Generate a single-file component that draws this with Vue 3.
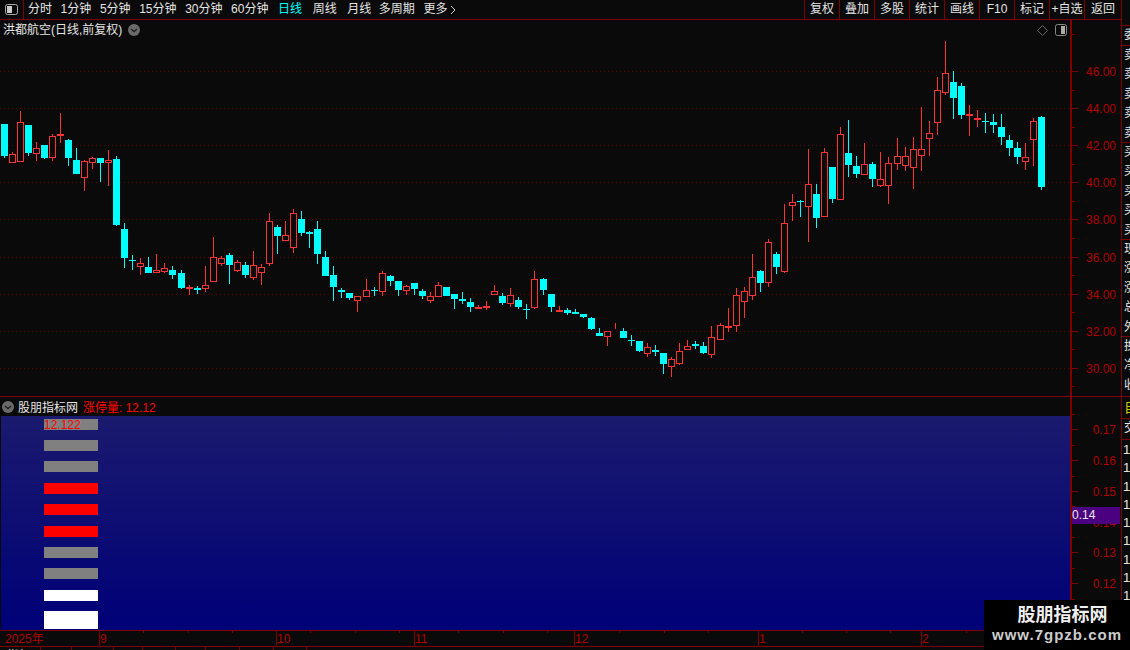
<script setup>
const raw = [
[0,124,124,156,158],[1,152,154,163,163],[1,111,122,162,162],[0,125,125,153,156],[1,142,148,154,161],[0,145,145,158,159],[1,134,136,158,161],[1,113,134,136,143],[0,139,140,158,166],[0,148,160,174,174],
[1,160,161,178,191],[1,157,158,163,169],[0,158,158,163,182],[1,150,160,163,186],[0,156,159,225,226],[0,223,229,258,268],[0,255,260,261,270],[1,258,263,267,275],[0,257,267,273,273],[1,254,270,273,273],
[1,263,268,272,273],[0,266,270,275,279],[0,270,273,288,289],[1,285,287,289,295],[0,286,288,290,294],[1,266,285,289,292],[1,237,257,282,282],[1,256,258,264,266],[0,253,255,265,284],[1,260,262,271,272],
[0,262,265,275,278],[1,251,265,278,280],[1,264,267,273,285],[1,213,221,264,266],[0,225,227,236,254],[1,221,235,241,241],[1,209,213,248,253],[0,211,219,233,236],[0,231,232,234,248],[0,221,229,254,264],
[0,251,257,276,276],[0,266,275,287,301],[0,288,290,292,298],[0,293,293,298,300],[1,296,296,301,312],[1,279,290,297,297],[0,287,290,291,296],[1,271,273,292,296],[0,275,276,281,286],[0,281,281,290,296],
[1,285,286,291,295],[0,283,283,289,295],[0,289,291,296,299],[1,292,296,301,303],[1,282,285,297,297],[0,287,287,296,296],[0,294,294,299,309],[0,292,299,301,304],[0,298,302,307,312],[1,305,307,309,309],
[1,301,306,308,310],[1,285,291,295,295],[0,293,296,303,305],[1,288,295,304,307],[0,297,300,307,309],[0,304,309,310,319],[1,271,279,308,309],[0,278,279,290,295],[0,294,294,307,312],[1,306,310,312,312],
[0,308,310,313,315],[0,309,312,314,314],[0,314,314,317,318],[0,317,318,329,330],[0,328,333,336,336],[1,331,331,337,346],[1,323,329,330,330],[0,328,331,338,338],[0,335,340,341,346],[0,341,341,351,352],
[1,343,347,354,357],[0,345,350,352,356],[0,353,353,364,374],[1,357,359,367,377],[1,343,351,364,365],[1,340,346,350,350],[0,341,344,346,349],[0,342,346,353,354],[1,326,337,355,358],[1,323,325,340,340],
[1,308,326,328,332],[1,288,295,326,332],[1,287,291,302,318],[1,254,277,296,300],[0,270,271,283,292],[1,239,242,283,287],[0,252,254,267,274],[1,204,223,272,273],[1,194,202,206,221],[0,200,201,202,217],
[1,149,184,207,242],[0,184,194,218,228],[1,148,152,217,217],[0,167,167,199,203],[1,127,134,200,200],[0,120,153,165,177],[0,156,166,174,178],[1,143,164,175,175],[0,162,164,179,187],[1,152,179,186,187],
[1,157,163,186,204],[1,138,156,164,170],[1,147,156,166,171],[1,137,149,168,189],[1,107,149,156,171],[1,121,133,139,156],[1,77,90,123,135],[1,41,73,93,95],[0,71,82,98,119],[0,83,86,115,119],
[1,105,114,116,136],[1,110,118,120,127],[0,113,121,122,133],[0,114,122,125,133],[0,114,127,137,145],[0,135,140,148,156],[0,142,148,157,164],[1,143,157,162,170],[1,118,121,140,166],[0,116,117,187,190]
]
const candles = raw.map(([k, top, bt, bb, low], i) => ({
  id: i, up: k === 1, top, bt, bb, low,
  c: 4 + 8 * i + Math.floor((i + 0.3) / 22.25)
}))
const tabs = ['分时', '1分钟', '5分钟', '15分钟', '30分钟', '60分钟', '日线', '周线', '月线', '多周期']
const actions = ['复权', '叠加', '多股', '统计', '画线', 'F10', '标记', '+自选', '返回']
const grid = [71, 108, 145, 182, 219, 257, 294, 331, 368]
const prices = [['46.00', 71], ['44.00', 108], ['42.00', 145], ['40.00', 182], ['38.00', 219], ['36.00', 257], ['34.00', 294], ['32.00', 331], ['30.00', 368]]
const priceMinor = [34, 90, 127, 164, 201, 238, 275, 312, 349, 386]
const subLabels = [['0.17', 429], ['0.16', 460], ['0.15', 491], ['0.14', 522], ['0.13', 552], ['0.12', 583]]
const subMinor = [414, 445, 476, 506, 537, 568, 599]
const bars = [
  [419, 11, '#808080'], [440, 11, '#808080'], [461, 11, '#808080'], [483, 11, '#ff0000'], [504, 11, '#ff0000'],
  [526, 11, '#ff0000'], [547, 11, '#808080'], [568, 11, '#808080'], [590, 11, '#ffffff'], [611, 18, '#ffffff']
]
const months = [['9', 99], ['10', 276], ['11', 414], ['12', 574], ['1', 758], ['2', 921]]
const dateTicks = [143, 188, 232, 310, 355, 399, 458, 503, 547, 619, 664, 708, 802, 846, 890, 966, 1011]
const footer = [['指标', 41], ['', 31], ['', 42], ['', 29], ['', 33], ['', 30], ['', 34], ['', 34], ['', 33]]
const sideGroups = [['卖五', '卖四', '卖三', '卖二', '卖一'], ['买一', '买二', '买三', '买四', '买五'], ['现价', '涨跌', '涨幅', '总量', '外盘']]
const sideLast = ['换手', '净资', '收益']
const quotes = 9
</script>

<template>
  <div class="app">
    <div class="workspace">
      <header class="toolbar">
        <div class="panel-toggle">
          <svg width="13" height="11" viewBox="0 0 13 11">
            <rect x="0.5" y="0.5" width="12" height="10" rx="2" fill="none" stroke="#aaa" />
            <rect x="2" y="2" width="5" height="7" fill="#ccc" />
          </svg>
        </div>
        <nav class="tabs">
          <span v-for="t in tabs" :key="t" :class="{ active: t === '日线' }">{{ t }}</span>
          <span class="more">更多<svg width="6" height="10" viewBox="0 0 6 10"><path d="M1 1l4 4-4 4" fill="none" stroke="#ccc" /></svg></span>
        </nav>
        <div class="actions">
          <span v-for="a in actions" :key="a" class="action">{{ a }}</span>
        </div>
      </header>

      <section class="upper">
        <div class="plot">
          <div class="title">
            <span>洪都航空(日线,前复权)</span>
            <svg width="12" height="12" viewBox="0 0 12 12"><circle cx="6" cy="6" r="6" fill="#6a6a6a" /><path d="M3 5l3 2.6L9 5" fill="none" stroke="#1e1e1e" stroke-width="1.3" /></svg>
          </div>
          <div class="plot-tools">
            <svg width="11" height="11" viewBox="0 0 11 11"><path d="M5.5 0.5l5 5-5 5-5-5z" fill="none" stroke="#666" /></svg>
            <svg width="12" height="12" viewBox="0 0 12 12"><rect x="0.5" y="0.5" width="11" height="11" rx="2" fill="none" stroke="#888" /><rect x="6" y="2" width="4" height="8" fill="#aaa" /></svg>
          </div>
          <svg class="chart" width="1070" height="376" viewBox="0 20 1070 376" shape-rendering="crispEdges">
            <line v-for="y in grid" :key="y" x1="0" x2="1070" :y1="y + 0.5" :y2="y + 0.5" class="grid" />
            <g v-for="k in candles" :key="k.id">
              <template v-if="k.up">
                <rect :x="k.c" :y="k.top" width="1" :height="Math.max(k.bt - k.top, 0)" fill="#ff3232" />
                <rect :x="k.c" :y="k.bb" width="1" :height="Math.max(k.low - k.bb, 0)" fill="#ff3232" />
                <rect :x="k.c - 2.5" :y="k.bt + 0.5" width="6" :height="Math.max(k.bb - k.bt - 1, 0)" fill="#0a0a0a" stroke="#ff3232" />
              </template>
              <template v-else>
                <rect :x="k.c" :y="k.top" width="1" :height="k.low - k.top" fill="#00ffff" />
                <rect :x="k.c - 3" :y="k.bt" width="7" :height="k.bb - k.bt" fill="#00ffff" />
              </template>
            </g>
          </svg>
        </div>
        <div class="axis">
          <svg width="49" height="376" viewBox="0 20 49 376">
            <g shape-rendering="crispEdges">
              <rect v-for="y in priceMinor" :key="y" x="0" :y="y" width="3" height="1" fill="#800000" />
              <rect v-for="p in prices" :key="p[1]" x="0" :y="p[1]" width="6" height="1" fill="#800000" />
            </g>
            <text v-for="p in prices" :key="p[0]" x="44" :y="p[1] + 5" class="axis-label">{{ p[0] }}</text>
          </svg>
        </div>
      </section>

      <section class="lower">
        <div class="lower-main">
          <div class="sub-head">
            <svg width="12" height="12" viewBox="0 0 12 12"><circle cx="6" cy="6" r="6" fill="#6a6a6a" /><path d="M3 5l3 2.6L9 5" fill="none" stroke="#1e1e1e" stroke-width="1.3" /></svg>
            <span class="sub-name">股朋指标网</span>
            <span class="sub-value">涨停量: 12.12</span>
          </div>
          <div class="sub-plot">
            <svg width="1069" height="214" viewBox="1 416 1069 214">
              <g shape-rendering="crispEdges">
                <rect v-for="b in bars" :key="b[0]" x="44" :y="b[0]" width="54" :height="b[1]" :fill="b[2]" />
              </g>
              <text x="44" y="429" class="bar-label">12.122</text>
            </svg>
          </div>
        </div>
        <div class="axis sub-axis">
          <svg width="49" height="233" viewBox="0 397 49 233">
            <g shape-rendering="crispEdges">
              <rect v-for="y in subMinor" :key="y" x="0" :y="y" width="3" height="1" fill="#800000" />
              <rect v-for="p in subLabels" :key="p[1]" x="0" :y="p[1]" width="6" height="1" fill="#800000" />
            </g>
            <text v-for="p in subLabels" :key="p[0]" x="44" :y="p[1] + 5" class="axis-label">{{ p[0] }}</text>
          </svg>
          <div class="cursor-tag">0.14</div>
        </div>
      </section>

      <section class="dates">
        <svg width="1121" height="15" viewBox="0 631 1121 15">
          <g shape-rendering="crispEdges">
            <rect v-for="x in dateTicks" :key="x" :x="x" y="631" width="1" height="2" fill="#800000" />
            <rect v-for="m in months" :key="m[1]" :x="m[1]" y="631" width="1" height="15" fill="#800000" />
          </g>
          <text x="5" y="643" class="date-label">2025年</text>
          <text v-for="m in months" :key="m[0] + m[1]" :x="m[1] + 1" y="643" class="date-label">{{ m[0] }}</text>
        </svg>
      </section>

      <footer class="bottom">
        <span v-for="(f, i) in footer" :key="i" class="bottom-cell" :style="{ width: f[1] + 'px' }">{{ f[0] }}</span>
      </footer>
    </div>

    <aside class="side">
      <div class="side-blank"></div>
      <div class="side-row">委比</div>
      <div v-for="(g, i) in sideGroups" :key="i" class="side-group">
        <div v-for="s in g" :key="s" class="side-line">{{ s }}</div>
      </div>
      <div class="side-group last">
        <div v-for="s in sideLast" :key="s" class="side-line">{{ s }}</div>
      </div>
      <div class="side-tab">自选</div>
      <div class="side-row head">交易</div>
      <div class="side-quotes">
        <div v-for="n in quotes" :key="n" class="quote">1</div>
      </div>
    </aside>

    <div class="watermark">
      <div class="wm-name">股朋指标网</div>
      <div class="wm-url">www.7gpzb.com</div>
    </div>
  </div>
</template>

<style scoped>
.app {
  position: relative;
  display: flex;
  width: 1130px;
  height: 650px;
  overflow: hidden;
  background: #0a0a0a;
  font-family: "Liberation Sans", "Noto Sans CJK SC", sans-serif;
  font-size: 12px;
  color: #e4e4e4;
}
svg { display: block; }
.workspace {
  display: flex;
  flex-direction: column;
  width: 1121px;
  flex: none;
}
.toolbar {
  display: flex;
  align-items: stretch;
  height: 19px;
  border-bottom: 1px solid #800000;
  flex: none;
}
.panel-toggle {
  display: flex;
  align-items: center;
  justify-content: center;
  width: 23px;
  border-right: 1px solid #800000;
  flex: none;
}
.tabs {
  display: flex;
  align-items: center;
  gap: 8.6px;
  padding-left: 4px;
  line-height: 19px;
  white-space: nowrap;
}
.tabs span:nth-child(7) { margin-left: 1px; }
.tabs span:nth-child(8),
.tabs span:nth-child(9) { margin-left: 2px; }
.tabs span:nth-child(10) { margin-left: -1px; }
.tabs .active { color: #00ffff; }
.more {
  display: inline-flex;
  align-items: center;
  gap: 3px;
}
.actions {
  display: flex;
  margin-left: auto;
}
.action {
  width: 34px;
  border-left: 1px solid #800000;
  text-align: center;
  line-height: 19px;
  white-space: nowrap;
}
.action:last-child { width: 36px; }
.upper {
  display: flex;
  height: 376px;
  border-bottom: 1px solid #800000;
  flex: none;
}
.plot {
  position: relative;
  width: 1070px;
  flex: none;
}
.title {
  position: absolute;
  left: 3px;
  top: 2px;
  display: flex;
  align-items: center;
  gap: 6px;
  line-height: 16px;
  white-space: nowrap;
}
.plot-tools {
  position: absolute;
  top: 4px;
  right: 3px;
  display: flex;
  align-items: center;
  gap: 7px;
}
.grid {
  stroke: #5c0000;
  stroke-width: 1;
  stroke-dasharray: 1 3;
}
.axis {
  position: relative;
  width: 49px;
  border-left: 2px solid #800000;
  flex: none;
}
.axis-label {
  fill: #b00000;
  font-size: 12px;
  text-anchor: end;
}
.lower {
  display: flex;
  height: 233px;
  border-bottom: 1px solid #800000;
  flex: none;
}
.lower-main {
  display: flex;
  flex-direction: column;
  width: 1070px;
  flex: none;
}
.sub-head {
  display: flex;
  align-items: center;
  height: 19px;
  padding-left: 2px;
  white-space: nowrap;
  flex: none;
}
.sub-name { margin-left: 4px; }
.sub-value {
  margin-left: 5px;
  color: #ff0000;
}
.sub-plot {
  height: 214px;
  margin-left: 1px;
  background: linear-gradient(#1a1a6e, #000078);
}
.bar-label {
  fill: #ff0000;
  font-size: 12px;
}
.cursor-tag {
  position: absolute;
  left: 0;
  right: 1px;
  top: 110px;
  height: 17px;
  background: #4b0082;
  color: #e8e8e8;
  line-height: 17px;
}
.dates {
  height: 15px;
  border-bottom: 1px solid #800000;
  flex: none;
}
.date-label {
  fill: #b00000;
  font-size: 12px;
}
.bottom {
  display: flex;
  height: 3px;
  overflow: hidden;
}
.bottom-cell {
  padding-left: 7px;
  box-sizing: border-box;
  border-right: 1px solid #800000;
  line-height: 18px;
  white-space: nowrap;
  flex: none;
}
.side {
  display: flex;
  flex-direction: column;
  width: 9px;
  box-sizing: border-box;
  border-left: 1px solid #800000;
  overflow: hidden;
  flex: none;
  white-space: nowrap;
}
.side-blank {
  height: 25px;
  border-bottom: 1px solid #800000;
  flex: none;
}
.side-row {
  height: 19px;
  padding-left: 2px;
  border-bottom: 1px solid #800000;
  line-height: 19px;
  flex: none;
}
.side-group {
  height: 96px;
  padding-left: 2px;
  border-bottom: 1px solid #800000;
  flex: none;
}
.side-group.last { height: 59px; }
.side-line {
  height: 19.4px;
  line-height: 19.4px;
}
.side-tab {
  height: 21px;
  padding-left: 2px;
  border-bottom: 1px solid #800000;
  color: #c8c800;
  font-size: 14px;
  line-height: 21px;
  flex: none;
}
.side-row.head { height: 20px; }
.side-quotes { padding-top: 1px; }
.quote {
  height: 18.3px;
  padding-left: 1px;
  font-size: 13px;
  line-height: 18.3px;
}
.watermark {
  position: absolute;
  right: 0;
  bottom: 0;
  display: flex;
  flex-direction: column;
  align-items: center;
  width: 146px;
  height: 50px;
  background: #000;
}
.wm-name {
  margin-top: 4px;
  margin-left: 11px;
  color: #eee;
  font-size: 18px;
  font-weight: 700;
  line-height: 22px;
}
.wm-url {
  margin-top: -1px;
  color: #ccc;
  font-size: 15px;
  font-weight: 700;
  letter-spacing: 1px;
  line-height: 20px;
}
</style>
